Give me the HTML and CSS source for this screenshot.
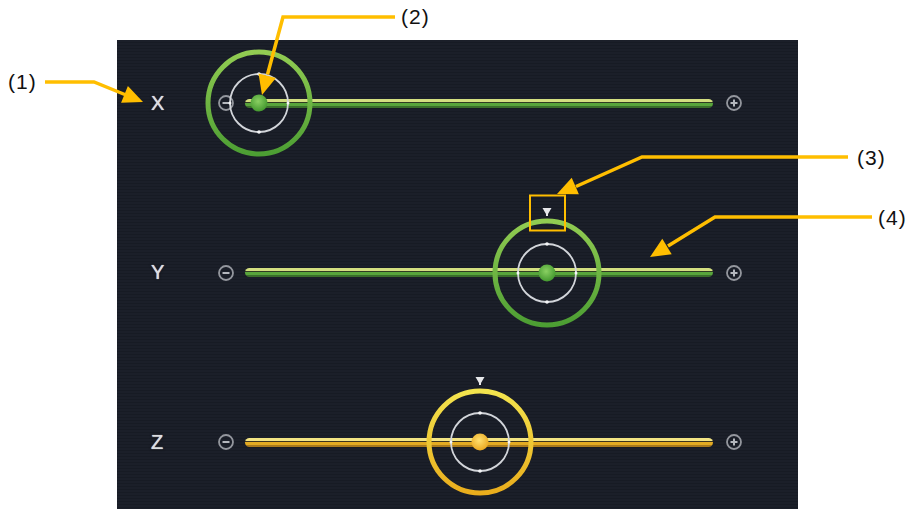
FILE: index.html
```html
<!DOCTYPE html>
<html lang="en">
<head>
  <meta charset="UTF-8">
  <meta name="viewport" content="width=device-width, initial-scale=1.0">
  <title>Axis Jog Sliders</title>
  <link rel="stylesheet" href="styles.css">
</head>
<body>
  <svg class="defs" aria-hidden="true">
    <defs>
      <linearGradient id="ringGreen" x1="0" y1="0" x2="0" y2="1">
        <stop offset="0" stop-color="#92cc52"/>
        <stop offset="1" stop-color="#4c9e33"/>
      </linearGradient>
      <linearGradient id="ringYellow" x1="0" y1="0" x2="0" y2="1">
        <stop offset="0" stop-color="#f3e44e"/>
        <stop offset="1" stop-color="#e9ad1c"/>
      </linearGradient>
      <radialGradient id="dotGreen" cx="0.45" cy="0.4" r="0.6">
        <stop offset="0" stop-color="#8ad062"/>
        <stop offset="1" stop-color="#44992f"/>
      </radialGradient>
      <radialGradient id="dotYellow" cx="0.45" cy="0.4" r="0.6">
        <stop offset="0" stop-color="#ffe070"/>
        <stop offset="1" stop-color="#eaa922"/>
      </radialGradient>
    </defs>
  </svg>

  <div class="stage">
    <div class="panel">

      <div class="axis">
        <span class="axis-label">X</span>
        <svg class="step" viewBox="-9 -9 18 18"><circle r="7"/><line x1="-3.5" y1="0" x2="3.5" y2="0"/></svg>
        <div class="track track-green">
          <div class="knob" style="left: 3%">
            <svg viewBox="-60 -70 120 130">
              <circle class="ring" r="51" stroke="url(#ringGreen)"/>
              <circle class="inner" r="29"/>
              <circle class="tick" cx="0" cy="-29" r="1.8"/>
              <circle class="tick" cx="0" cy="29" r="1.8"/>
              <circle class="tick" cx="-29" cy="0" r="1.5"/>
              <circle class="tick" cx="29" cy="0" r="1.5"/>
              <circle r="8.5" fill="url(#dotGreen)"/>
            </svg>
          </div>
        </div>
        <svg class="step" viewBox="-9 -9 18 18"><circle r="7"/><line x1="-3.5" y1="0" x2="3.5" y2="0"/><line x1="0" y1="-3.5" x2="0" y2="3.5"/></svg>
      </div>

      <div class="axis">
        <span class="axis-label">Y</span>
        <svg class="step" viewBox="-9 -9 18 18"><circle r="7"/><line x1="-3.5" y1="0" x2="3.5" y2="0"/></svg>
        <div class="track track-green">
          <div class="knob" style="left: 64.5%">
            <svg viewBox="-60 -70 120 130">
              <path class="marker" d="M-4.5 -65 L4.5 -65 L1 -59 L1 -57 L-1 -57 L-1 -59 Z"/>
              <circle class="ring" r="52" stroke="url(#ringGreen)"/>
              <circle class="inner" r="29"/>
              <circle class="tick" cx="0" cy="-29" r="1.8"/>
              <circle class="tick" cx="0" cy="29" r="1.8"/>
              <circle class="tick" cx="-29" cy="0" r="1.5"/>
              <circle class="tick" cx="29" cy="0" r="1.5"/>
              <circle r="8.5" fill="url(#dotGreen)"/>
            </svg>
          </div>
        </div>
        <svg class="step" viewBox="-9 -9 18 18"><circle r="7"/><line x1="-3.5" y1="0" x2="3.5" y2="0"/><line x1="0" y1="-3.5" x2="0" y2="3.5"/></svg>
      </div>

      <div class="axis">
        <span class="axis-label">Z</span>
        <svg class="step" viewBox="-9 -9 18 18"><circle r="7"/><line x1="-3.5" y1="0" x2="3.5" y2="0"/></svg>
        <div class="track track-yellow">
          <div class="knob" style="left: 50.2%">
            <svg viewBox="-60 -70 120 130">
              <path class="marker" d="M-4.5 -65 L4.5 -65 L1 -59 L1 -57 L-1 -57 L-1 -59 Z"/>
              <circle class="ring" r="51" stroke="url(#ringYellow)"/>
              <circle class="inner" r="29"/>
              <circle class="tick" cx="0" cy="-29" r="1.8"/>
              <circle class="tick" cx="0" cy="29" r="1.8"/>
              <circle class="tick" cx="-29" cy="0" r="1.5"/>
              <circle class="tick" cx="29" cy="0" r="1.5"/>
              <circle r="8.5" fill="url(#dotYellow)"/>
            </svg>
          </div>
        </div>
        <svg class="step" viewBox="-9 -9 18 18"><circle r="7"/><line x1="-3.5" y1="0" x2="3.5" y2="0"/><line x1="0" y1="-3.5" x2="0" y2="3.5"/></svg>
      </div>

    </div>

    <!-- callouts drawn over the screenshot -->
    <svg class="callouts" viewBox="0 0 912 509">
      <polyline points="45,82 94,82 126,95"/>
      <polygon points="143,102 121.1,102.7 127.9,86.1"/>
      <text x="8" y="89">(1)</text>

      <polyline points="395,17 283,17 267.5,74.5"/>
      <polygon points="262,95 258.5,73.4 275.9,78"/>
      <text x="401" y="24">(2)</text>

      <polyline points="848,157 642,157 576,186.5"/>
      <polygon points="557,194 571.7,177.7 578.9,194.3"/>
      <rect class="box" x="530" y="195.5" width="35" height="35"/>
      <text x="857" y="165">(3)</text>

      <polyline points="872,217 715,217 668,246"/>
      <polygon points="650,257 662.3,238.8 671.7,254.2"/>
      <text x="878" y="225">(4)</text>
    </svg>
  </div>
</body>
</html>
```

FILE: styles.css
```css
html, body {
  margin: 0;
  padding: 0;
  background-color: #fff;
}

.defs {
  position: absolute;
  width: 0;
  height: 0;
}

.stage {
  position: relative;
  width: 912px;
  height: 509px;
  overflow: hidden;
  box-sizing: border-box;
  padding: 40px 0 0 117px;
}

.panel {
  width: 681px;
  height: 469px;
  box-sizing: border-box;
  padding-top: 20px;
  display: flex;
  flex-direction: column;
  gap: 83.5px;
  background-color: #1a1e28;
  background-image: repeating-linear-gradient(to bottom, #1b1f29 0, #1b1f29 2px, #171b24 2px, #171b24 3px);
}

.axis {
  height: 86px;
  display: flex;
  align-items: center;
  padding-left: 34px;
}

.axis-label {
  width: 66px;
  font-family: "Liberation Sans", Arial, sans-serif;
  font-size: 20px;
  color: #dcdee2;
  text-shadow: 0 0 1px #fff, 0 0 3px rgba(0, 0, 0, 0.9);
}

.step {
  width: 18px;
  height: 18px;
  flex: none;
}

.step circle {
  fill: none;
  stroke: #94979e;
  stroke-width: 1.8;
}

.step line {
  stroke: #b4b7bd;
  stroke-width: 2;
}

.track {
  position: relative;
  width: 468px;
  height: 9px;
  margin: 0 12px 0 10px;
  border-radius: 5px;
}

.track-green {
  background: linear-gradient(to bottom, #d3df80 0, #d3df80 3px, #2f3b22 3px, #2f3b22 4px, #58a53b 4px, #58a53b 7px, #3a6e2a 7px);
}

.track-yellow {
  background: linear-gradient(to bottom, #f3e584 0, #f3e584 3px, #3b3320 3px, #3b3320 4px, #e3ab22 4px, #e3ab22 7px, #a97a1c 7px);
}

.knob {
  position: absolute;
  top: 50%;
  width: 120px;
  height: 130px;
  margin: -70px 0 0 -60px;
}

.knob svg {
  display: block;
  width: 120px;
  height: 130px;
  overflow: visible;
}

.ring {
  fill: none;
  stroke-width: 5;
}

.inner {
  fill: none;
  stroke: #d2d5da;
  stroke-width: 1.8;
}

.tick {
  fill: #f4f5f7;
}

.marker {
  fill: #e6e7ea;
}

.callouts {
  position: absolute;
  left: 0;
  top: 0;
  width: 912px;
  height: 509px;
  pointer-events: none;
}

.callouts polyline {
  fill: none;
  stroke: #ffbe00;
  stroke-width: 3.5;
  stroke-linejoin: miter;
}

.callouts polygon {
  fill: #ffbe00;
}

.callouts .box {
  fill: none;
  stroke: #ffbe00;
  stroke-width: 2;
}

.callouts text {
  font-family: "Liberation Sans", Arial, sans-serif;
  font-size: 21px;
  letter-spacing: 1px;
  fill: #111;
}
```
